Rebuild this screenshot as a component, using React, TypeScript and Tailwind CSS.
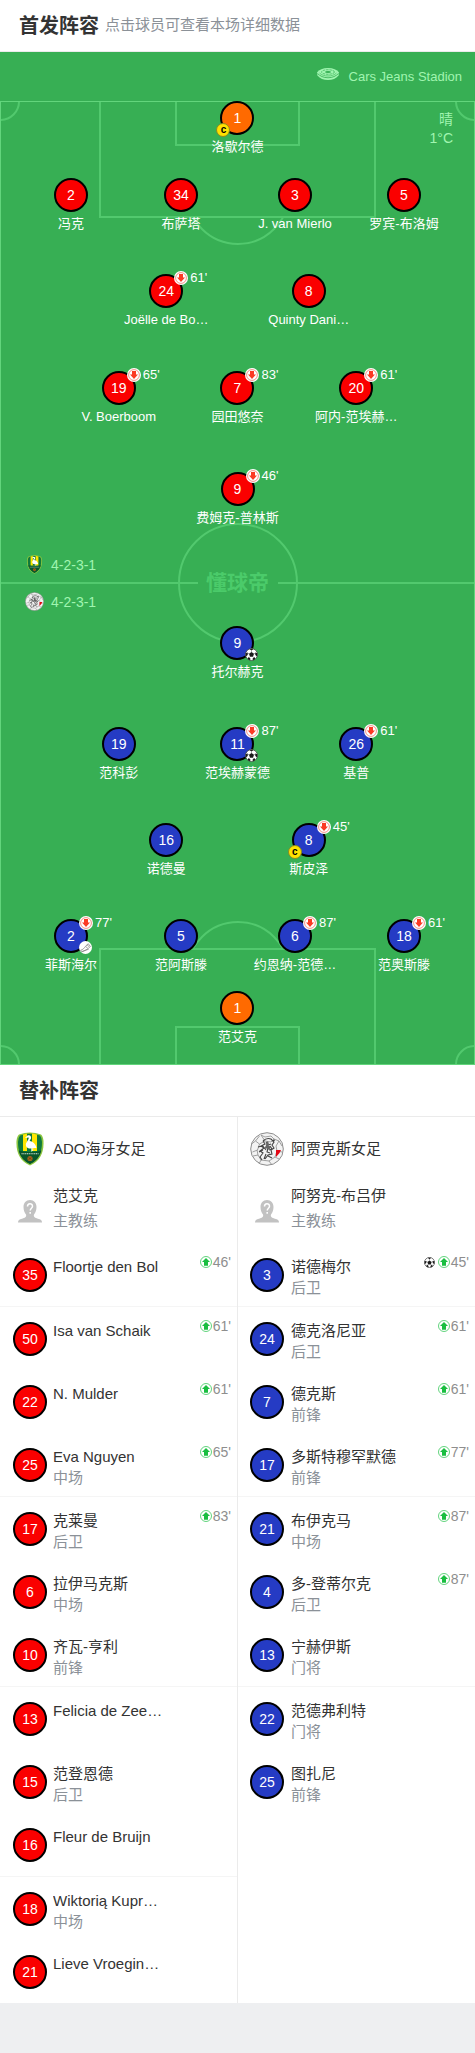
type Team = 'home' | 'away';

interface Player {
  number: number;
  name: string;
  off?: string;
  mark?: 'goal' | 'assist';
  captain?: boolean;
  keeper?: boolean;
}

interface Line {
  spacing: string;
  columns: string;
  players: Player[];
}

interface Sub {
  number: number;
  name: string;
  position?: string;
  on?: string;
  goal?: boolean;
}

const ONE = 'grid-cols-1';
const TWO = 'grid-cols-2 px-[20%]';
const THREE = 'grid-cols-3 px-[12.5%]';
const FOUR = 'grid-cols-[110fr_110fr_118fr_100fr] pl-4 pr-[21px]';

const homeLines: Line[] = [
  { spacing: '-mt-px', columns: ONE, players: [{ number: 1, name: '洛歇尔德', captain: true, keeper: true }] },
  {
    spacing: 'mt-[22px]',
    columns: FOUR,
    players: [
      { number: 2, name: '冯克' },
      { number: 34, name: '布萨塔' },
      { number: 3, name: 'J. van Mierlo' },
      { number: 5, name: '罗宾-布洛姆' },
    ],
  },
  {
    spacing: 'mt-[41px]',
    columns: TWO,
    players: [
      { number: 24, name: 'Joëlle de Bo…', off: "61'" },
      { number: 8, name: 'Quinty Dani…' },
    ],
  },
  {
    spacing: 'mt-[42px]',
    columns: THREE,
    players: [
      { number: 19, name: 'V. Boerboom', off: "65'" },
      { number: 7, name: '园田悠奈', off: "83'" },
      { number: 20, name: '阿内-范埃赫…', off: "61'" },
    ],
  },
  { spacing: 'mt-[46px]', columns: ONE, players: [{ number: 9, name: '费姆克-普林斯', off: "46'" }] },
];

const awayLines: Line[] = [
  { spacing: 'mt-[99px]', columns: ONE, players: [{ number: 9, name: '托尔赫克', mark: 'goal' }] },
  {
    spacing: 'mt-[46px]',
    columns: THREE,
    players: [
      { number: 19, name: '范科彭' },
      { number: 11, name: '范埃赫蒙德', off: "87'", mark: 'goal' },
      { number: 26, name: '基普', off: "61'" },
    ],
  },
  {
    spacing: 'mt-[41px]',
    columns: TWO,
    players: [
      { number: 16, name: '诺德曼' },
      { number: 8, name: '斯皮泽', off: "45'", captain: true },
    ],
  },
  {
    spacing: 'mt-[41px]',
    columns: FOUR,
    players: [
      { number: 2, name: '菲斯海尔', off: "77'", mark: 'assist' },
      { number: 5, name: '范阿斯滕' },
      { number: 6, name: '约恩纳-范德…', off: "87'" },
      { number: 18, name: '范奥斯滕', off: "61'" },
    ],
  },
  { spacing: 'mt-[17px]', columns: ONE, players: [{ number: 1, name: '范艾克', keeper: true }] },
];

const homeSubs: Sub[] = [
  { number: 35, name: 'Floortje den Bol', on: "46'" },
  { number: 50, name: 'Isa van Schaik', on: "61'" },
  { number: 22, name: 'N. Mulder', on: "61'" },
  { number: 25, name: 'Eva Nguyen', position: '中场', on: "65'" },
  { number: 17, name: '克莱曼', position: '后卫', on: "83'" },
  { number: 6, name: '拉伊马克斯', position: '中场' },
  { number: 10, name: '齐瓦-亨利', position: '前锋' },
  { number: 13, name: 'Felicia de Zee…' },
  { number: 15, name: '范登恩德', position: '后卫' },
  { number: 16, name: 'Fleur de Bruijn' },
  { number: 18, name: 'Wiktorią Kupr…', position: '中场' },
  { number: 21, name: 'Lieve Vroegin…' },
];

const awaySubs: Sub[] = [
  { number: 3, name: '诺德梅尔', position: '后卫', on: "45'", goal: true },
  { number: 24, name: '德克洛尼亚', position: '后卫', on: "61'" },
  { number: 7, name: '德克斯', position: '前锋', on: "61'" },
  { number: 17, name: '多斯特穆罕默德', position: '前锋', on: "77'" },
  { number: 21, name: '布伊克马', position: '中场', on: "87'" },
  { number: 4, name: '多-登蒂尔克', position: '后卫', on: "87'" },
  { number: 13, name: '宁赫伊斯', position: '门将' },
  { number: 22, name: '范德弗利特', position: '门将' },
  { number: 25, name: '图扎尼', position: '前锋' },
];

function HomeLogo({ className }: { className: string }) {
  return (
    <svg viewBox="0 0 28 34" className={className}>
      <path d="M3 2.5Q14-1.5 25 2.5Q27 4 27.5 9C28 21 24 29 14 33.5C4 29 0 21 .5 9Q1 4 3 2.5Z" fill="#8cc63f" />
      <path d="M4 3.5Q14 0 24 3.5Q26 6 26 10C26 20 23 27.5 14 32C5 27.5 2 20 2 10Q2 6 4 3.5Z" fill="#0f7a3c" />
      <path d="M7 2.5Q14 .5 21 2.5V19H7Z" fill="#ffe600" />
      <path d="M11 1.7h5V19h-5Z" fill="#0f7a3c" />
      <path d="M2.5 18.5Q14 22 25.5 18.5Q23 28 14 32Q5 28 2.5 18.5Z" fill="#08552a" />
      <path d="M9 6l2.5-2.500c2.500-1 4 .5 3.500 3l-1.500 2.500c4 .5 6 3 7 7l-3.500 0c-4 1.500-8-.5-7-4.500l2.500-4.500.3-1.500Z" fill="#fff" />
      <path d="M15.5 15v4.500M17 15l-.5 4" stroke="#fff" strokeWidth=".7" />
      <path d="M5.500 21.800h17" stroke="#d8e8d8" strokeWidth="1.100" strokeDasharray="1.200 .6" />
      <circle cx="14" cy="26.500" r="2.600" fill="#a8641c" />
      <path d="M12.500 25.500l3 2M15.500 25.500l-3 2" stroke="#5d3410" strokeWidth=".6" />
    </svg>
  );
}

function AwayLogo({ className }: { className: string }) {
  return (
    <svg viewBox="0 0 34 34" className={className}>
      <circle cx="17" cy="17" r="16.300" fill="#f3f3f3" stroke="#8c8c8c" strokeWidth="1" />
      <g fill="none" stroke="#8a8a8a" strokeWidth=".8">
        <path d="M11 3l4 2 6-1 3 3-3 3-6-1-4-6M1.500 12l4-3 4 3-2 6-5 2M5.500 9l4-5M3 24l5-1 3 5-2 4M8 23l-1-5M11 28l8 1 3 4M19 29l6-4 4 2M25 25l2-6 5 1M24 7l5 2 3 5M29 9l-3 5 1 5M9.500 12l5.500-3" />
      </g>
      <g fill="none" stroke="#444" strokeWidth="1.100">
        <path d="M13 9c2-2 5-3 8-2l3 3-2 3 2 3-3 2 1 4-4 1-3 4M13 9l2 3-4 2 3 2-4 3 3 2-3 4 2 3M16 10l2 3 3-1M15 15l3 1-1 4 3 1M9 20l4-2M16 22l-2 5M20 14l2 3-3 1M12 13l4 5M8 15l4-1M18 24l4 2M22 9l3-1" />
      </g>
      <path d="M17 9l2 2-1 2 3 2-2 3-2-2-2 2 1-5Z" fill="#666" />
      <path d="M26 18h5l-1.500 3-3.500 4Z" fill="#e30613" />
    </svg>
  );
}

function Football({ className }: { className: string }) {
  return (
    <svg viewBox="0 0 24 24" className={className}>
      <circle cx="12" cy="12" r="11" fill="#fff" stroke="#444" strokeWidth="1.500" />
      <path d="M12 7.500l4.600 3.300-1.800 5.400H9.200l-1.800-5.400Z" fill="#1a1a1a" />
      <path d="M8 1.800h8L12 4.800ZM1.200 9.500l4-1L5 13l-3.400 2.500ZM22.800 9.500l-4-1 .2 4.500 3.400 2.500ZM5 20.300l1.500-3.800 3.500 3-.8 3.300ZM19 20.300l-1.500-3.800-3.500 3 .8 3.300Z" fill="#1a1a1a" />
      <path d="M12 4.500v3M5 9.500l2.400 1.300M19 9.500l-2.400 1.300M7.500 18l1.700-1.800M16.500 18l-1.700-1.800" stroke="#555" />
    </svg>
  );
}

function Boot({ className }: { className: string }) {
  return (
    <svg viewBox="0 0 24 24" className={className}>
      <circle cx="12" cy="12" r="12" fill="#fff" />
      <path d="M3 17c4-1 6-3 9-7l5-5 4 5-4 4c-4 2-7 4-10 5-2 .5-4 0-4-2ZM12 10l4 3M5 20l13-5M15 7l4 4" fill="none" stroke="#888" strokeWidth="1.500" />
    </svg>
  );
}

function SubOff({ className }: { className: string }) {
  return (
    <svg viewBox="0 0 28 28" className={className}>
      <circle cx="14" cy="14" r="14" fill="#fff" />
      <circle cx="14" cy="14" r="10.800" fill="none" stroke="#f05545" strokeWidth="1.300" />
      <path d="M10 6h8v7h4L14 22l-8-9h4Z" fill="#fb3a24" />
    </svg>
  );
}

function SubOn({ className }: { className: string }) {
  return (
    <svg viewBox="0 0 24 24" className={className}>
      <circle cx="12" cy="12" r="11" fill="#fff" stroke="#2fc553" strokeWidth="1.500" />
      <path d="M12 4l8 8h-4v7.500H8V12H4Z" fill="#19be40" />
    </svg>
  );
}

function StadiumIcon() {
  return (
    <svg viewBox="0 0 44 24" className="mb-[6px] h-3 w-[22px]">
      <path d="M0 9C4 3 12 0 22 0s18 3 22 9l-1 6C38 21 31 24 22 24S6 21 1 15Z" fill="#a0f5b0" />
      <g fill="none" stroke="#37af54">
        <path d="M1 11c5 5 12 8.500 21 8.500S38 16 43 11" strokeWidth="1.600" />
        <path d="M5 10c4 4 10 6 17 6s13-2 17-6" strokeWidth="1.200" />
        <ellipse cx="22" cy="8" rx="13" ry="4.500" strokeWidth="1.400" strokeDasharray="5 1.500" />
      </g>
      <ellipse cx="22" cy="8" rx="6" ry="1.800" fill="#37af54" />
    </svg>
  );
}

function CoachAvatar() {
  return (
    <svg viewBox="0 0 24 23" className="h-[23px] w-6" fill="#c2c2c2">
      <path d="M12 0c4 0 6.500 3 6.500 7 0 3-1 5.500-2.500 7.500-1 3 2 3.500 5 4.500 2 .7 3 1.700 3 3.500H0c0-1.800 1-2.800 3-3.500 3-1 6-1.500 5-4.500C6.500 12.500 5.500 10 5.500 7c0-4 2.500-7 6.500-7Z" />
      <path d="M9.500 6.500c0-3.500 5-3.500 5-.3 0 2-2.300 2-2.300 4.300M12.200 12v1.800" fill="none" stroke="#fff" strokeWidth="1.500" />
    </svg>
  );
}

function ShirtNumber({ value, color }: { value: number; color: string }) {
  return (
    <span
      className={`flex h-[34px] w-[34px] shrink-0 items-center justify-center rounded-full border-2 border-black text-sm text-white ${color}`}
    >
      {value}
    </span>
  );
}

const shirtColor = (team: Team) => (team === 'home' ? 'bg-[#fa0000]' : 'bg-[#253bc4]');

function PitchPlayer({ player, team }: { player: Player; team: Team }) {
  return (
    <button type="button" className="flex flex-col items-center justify-self-center">
      <span className="relative">
        <ShirtNumber value={player.number} color={player.keeper ? 'bg-[#ff6a00]' : shirtColor(team)} />
        {player.off && (
          <span className="absolute -top-1 left-[25px] flex items-center gap-[2px] text-[13px] leading-4 text-white">
            <SubOff className="h-[14px] w-[14px] shrink-0" />
            {player.off}
          </span>
        )}
        {player.mark === 'goal' && <Football className="absolute -right-1 -bottom-px h-[13px] w-[13px]" />}
        {player.mark === 'assist' && <Boot className="absolute -right-1 -bottom-px h-[13px] w-[13px]" />}
        {player.captain && (
          <span className="absolute -bottom-[2px] -left-1 flex h-[14px] w-[14px] items-center justify-center rounded-full border border-[#8a8a20] bg-[#ffe100] text-[10px] leading-none font-bold text-black">
            c
          </span>
        )}
      </span>
      <span className="mt-[3px] text-[13px] leading-[18px] whitespace-nowrap text-white">{player.name}</span>
    </button>
  );
}

function PitchLines() {
  const line = 'absolute border-[#52c96e]';
  return (
    <div className="pointer-events-none absolute inset-0 overflow-hidden border border-[#62d57c]">
      {/* penalty areas */}
      <div className={`${line} -top-px left-[20.7%] h-[117px] w-[58.6%] border-2 border-t-0`} />
      <div className={`${line} -bottom-px left-[20.7%] h-[117px] w-[58.6%] border-2 border-b-0`} />
      <div className={`${line} -top-px left-[36.7%] h-[45px] w-[26.6%] border-2 border-t-0`} />
      <div className={`${line} -bottom-px left-[36.7%] h-[39px] w-[26.6%] border-2 border-b-0`} />
      <div className="absolute top-[116px] left-0 flex h-[27px] w-full items-end justify-center overflow-hidden">
        <div className="h-[104px] w-[104px] shrink-0 rounded-full border-2 border-[#52c96e]" />
      </div>
      <div className="absolute bottom-[116px] left-0 flex h-[27px] w-full items-start justify-center overflow-hidden">
        <div className="h-[104px] w-[104px] shrink-0 rounded-full border-2 border-[#52c96e]" />
      </div>
      {/* corners */}
      <div className={`${line} -top-5 -left-5 h-[39px] w-[39px] rounded-full border-2`} />
      <div className={`${line} -top-5 -right-5 h-[39px] w-[39px] rounded-full border-2`} />
      <div className={`${line} -bottom-5 -left-5 h-[39px] w-[39px] rounded-full border-2`} />
      <div className={`${line} -right-5 -bottom-5 h-[39px] w-[39px] rounded-full border-2`} />
      {/* halfway line */}
      <div className="absolute inset-0 flex items-center">
        <div className="h-[2px] flex-1 bg-[#52c96e]" />
        <div className="w-20 text-center text-[21px] leading-6 font-bold text-[#4bcb6a]">懂球帝</div>
        <div className="h-[2px] flex-1 bg-[#52c96e]" />
      </div>
      <div className="absolute inset-0 flex items-center justify-center">
        <div className="h-[120px] w-[120px] rounded-full border-2 border-[#52c96e]" />
      </div>
    </div>
  );
}

function LineupRow({ line, team }: { line: Line; team: Team }) {
  return (
    <div className={`relative grid ${line.spacing} ${line.columns}`}>
      {line.players.map((player) => (
        <PitchPlayer key={player.number} player={player} team={team} />
      ))}
    </div>
  );
}

function Pitch() {
  return (
    <section className="bg-[#37af54]">
      <div className="flex h-[50px] items-center justify-end gap-[10px] pr-[13px] text-[13px] text-[#a0f5b0]">
        <StadiumIcon />
        Cars Jeans Stadion
      </div>
      <div className="relative pb-[19px]">
        <PitchLines />
        <div className="absolute top-[9px] right-[22px] text-right text-sm leading-[19px] text-[#a0f5b0]">
          <div>晴</div>
          <div>1°C</div>
        </div>
        {homeLines.map((line, i) => (
          <LineupRow key={i} line={line} team="home" />
        ))}
        {awayLines.map((line, i) => (
          <LineupRow key={i} line={line} team="away" />
        ))}
        <div className="absolute inset-y-0 left-[25px] flex flex-col justify-center gap-[17px] text-sm leading-5 text-[#a0f5b0]">
          <div className="flex items-center gap-[7px]">
            <HomeLogo className="h-[19px] w-[19px]" />
            4-2-3-1
          </div>
          <div className="flex items-center gap-[7px]">
            <AwayLogo className="h-[19px] w-[19px]" />
            4-2-3-1
          </div>
        </div>
      </div>
    </section>
  );
}

function Bench({ team, club, coach, subs }: { team: Team; club: string; coach: string; subs: Sub[] }) {
  const Logo = team === 'home' ? HomeLogo : AwayLogo;
  const inset = team === 'home' ? 'gap-[6px] pl-[13px]' : 'gap-[7px] pl-3';

  return (
    <div className={`text-[15px] text-[#333] ${team === 'home' ? 'border-r border-[#ebebeb]' : ''}`}>
      <div className={`flex h-[63px] items-center ${inset}`}>
        <Logo className="h-[34px] w-[34px]" />
        <h3 className="pt-[2px]">{club}</h3>
      </div>
      <div className={`flex h-[63px] ${inset}`}>
        <div className="flex w-[34px] items-center justify-center">
          <CoachAvatar />
        </div>
        <div className="pt-[3px] leading-[25px]">
          <div>{coach}</div>
          <div className="text-[#8b9198]">主教练</div>
        </div>
      </div>
      <ul>
        {subs.map((sub, i) => (
          <li
            key={sub.number}
            className={`flex pr-[6px] ${inset} ${i % 3 === 0 ? 'h-16 border-b border-[#f5f5f5]' : 'h-[63px]'}`}
          >
            <div className="pt-[15px]">
              <ShirtNumber value={sub.number} color={shirtColor(team)} />
            </div>
            <div className="min-w-0 flex-1 pt-[13px] leading-[21px]">
              <div className="truncate">{sub.name}</div>
              {sub.position && <div className="text-[#8b9198]">{sub.position}</div>}
            </div>
            {sub.on && (
              <div className="flex h-5 items-center gap-px pt-[18px] text-sm text-[#8e8e8e]">
                {sub.goal && <Football className="mr-[2px] h-[11px] w-[11px]" />}
                <SubOn className="h-3 w-3" />
                {sub.on}
              </div>
            )}
          </li>
        ))}
      </ul>
    </div>
  );
}

export default function App() {
  return (
    <div className="min-h-screen bg-[#eeeff1] font-['Liberation_Sans','Noto_Sans_CJK_SC',sans-serif]">
      <header className="flex h-[52px] items-center gap-[6px] border-b border-[#ebebeb] bg-white px-[19px]">
        <h2 className="text-xl font-bold text-[#333]">首发阵容</h2>
        <p className="text-[15px] text-[#8b9198]">点击球员可查看本场详细数据</p>
      </header>
      <Pitch />
      <section className="bg-white">
        <h2 className="flex h-[52px] items-center border-b border-[#ebebeb] px-[19px] text-xl font-bold text-[#333]">
          替补阵容
        </h2>
        <div className="grid grid-cols-[238fr_237fr]">
          <Bench team="home" club="ADO海牙女足" coach="范艾克" subs={homeSubs} />
          <Bench team="away" club="阿贾克斯女足" coach="阿努克-布吕伊" subs={awaySubs} />
        </div>
      </section>
    </div>
  );
}
